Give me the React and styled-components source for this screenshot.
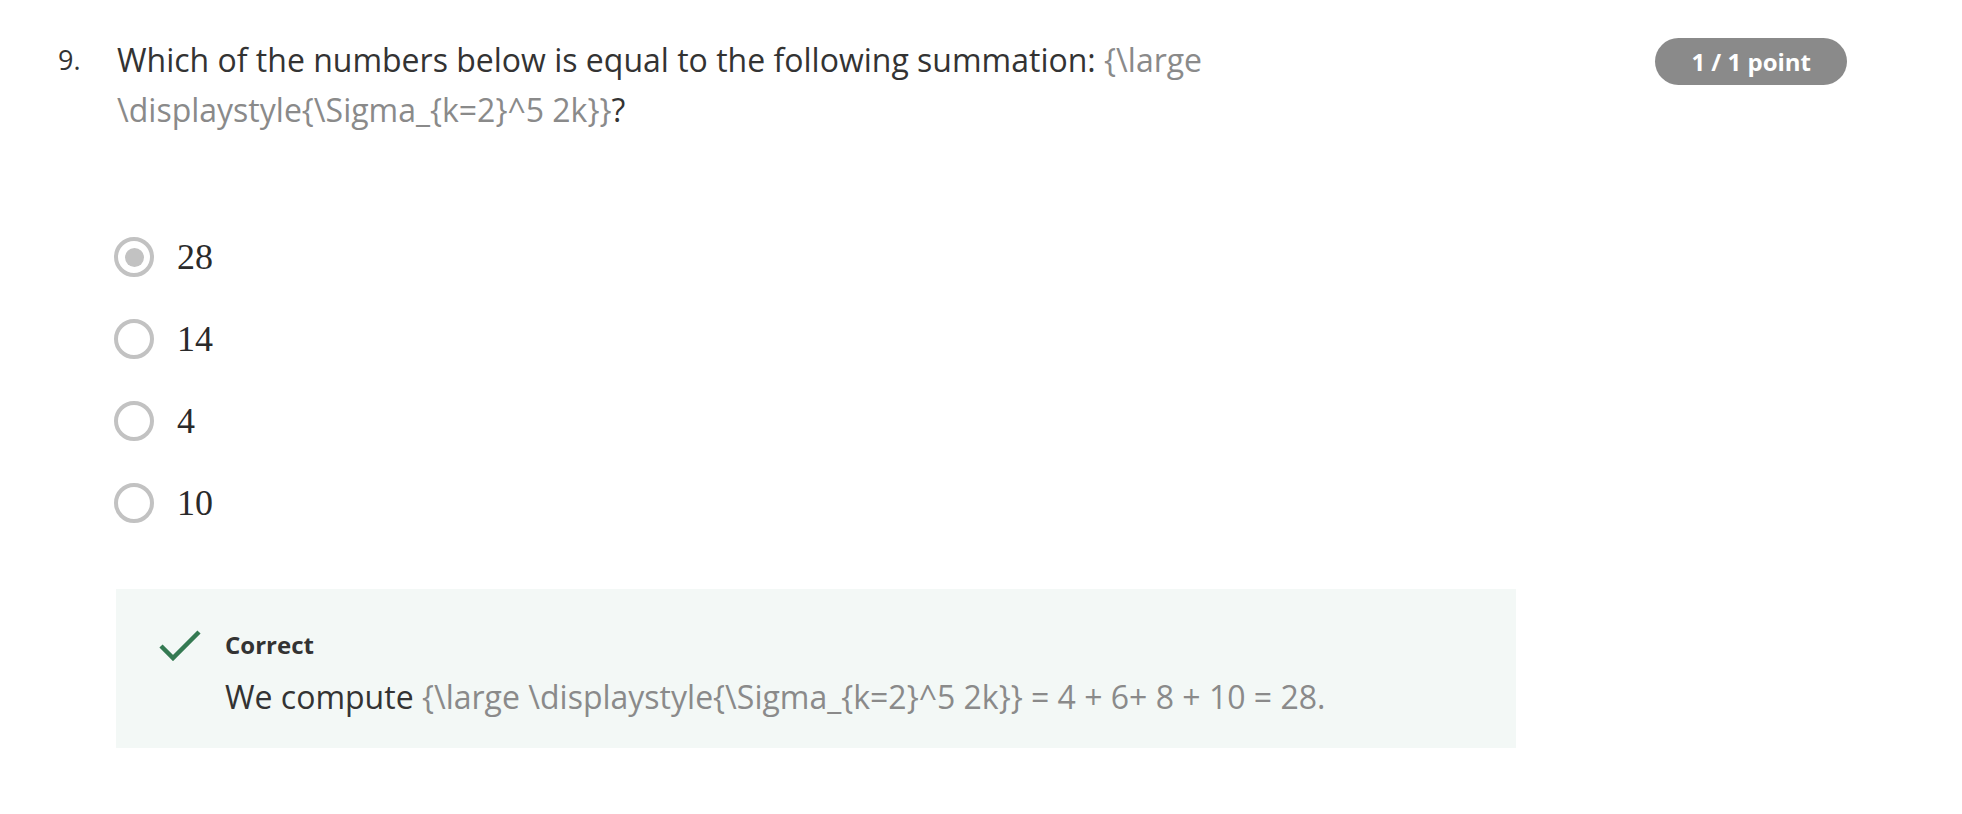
import React from 'react'
import styled, { createGlobalStyle } from 'styled-components'

const GlobalStyle = createGlobalStyle`
  * { box-sizing: border-box; }
  body {
    margin: 0;
    background: #ffffff;
    font-family: "Open Sans", "Liberation Sans", sans-serif;
    color: #333333;
  }
`

const Page = styled.div`
  width: 1962px;
  height: 814px;
  padding: 35px 115px 0 58px;
`

const Header = styled.div`
  display: flex;
  align-items: flex-start;
`

const Number = styled.div`
  width: 59px;
  flex-shrink: 0;
  font-size: 27px;
  line-height: 50px;
  color: #333333;
`

const Body = styled.div`
  width: 1400px;
  flex-shrink: 0;
`

const Question = styled.div`
  font-size: 32px;
  line-height: 50px;
  color: #333333;
`

const Tex = styled.span`
  color: #8a8a8a;
`

const Badge = styled.div`
  margin-left: auto;
  margin-top: 3px;
  height: 47px;
  padding: 0 36px;
  border-radius: 24px;
  background: #8a8a8a;
  color: #ffffff;
  font-weight: 700;
  font-size: 24px;
  display: flex;
  align-items: center;
  white-space: nowrap;
`

const Options = styled.div`
  display: flex;
  flex-direction: column;
  gap: 42px;
  margin-top: 102px;
`

const Option = styled.label`
  display: flex;
  align-items: center;
  gap: 23px;
  height: 40px;
  margin-left: -3px;
`

const Radio = styled.span`
  width: 40px;
  height: 40px;
  border-radius: 50%;
  border: 4px solid #c2c2c2;
  display: flex;
  align-items: center;
  justify-content: center;
  flex-shrink: 0;

  &::after {
    content: "";
    width: 19px;
    height: 19px;
    border-radius: 50%;
    background: ${(props) => (props.checked ? '#c2c2c2' : 'transparent')};
  }
`

const OptionText = styled.span`
  font-family: "Liberation Serif", "DejaVu Serif", serif;
  font-size: 36px;
  color: #2a2a2a;
`

const Feedback = styled.div`
  margin-top: 66px;
  margin-left: -1px;
  width: 1400px;
  height: 159px;
  background: #f3f8f6;
  display: flex;
  padding: 40px 0 0 43px;
`

const CheckIcon = styled.svg`
  width: 42px;
  height: 32px;
  flex-shrink: 0;
`

const FeedbackText = styled.div`
  margin-left: 24px;
`

const Verdict = styled.div`
  font-weight: 700;
  font-size: 24px;
  line-height: 32px;
  color: #333333;
`

const Explanation = styled.div`
  margin-top: 14px;
  font-size: 32px;
  line-height: 44px;
  color: #333333;
`

const options = [
  { label: '28', checked: true },
  { label: '14' },
  { label: '4' },
  { label: '10' },
]

const App = () => {
  return (
    <>
      <GlobalStyle />
      <Page>
        <Header>
          <Number>9.</Number>
          <Body>
            <Question>
              Which of the numbers below is equal to the following summation:{' '}
              <Tex>{'{\\large \\displaystyle{\\Sigma_{k=2}^5 2k}}'}</Tex>?
            </Question>
            <Options>
              {options.map((o) => (
                <Option key={o.label}>
                  <Radio checked={o.checked} />
                  <OptionText>{o.label}</OptionText>
                </Option>
              ))}
            </Options>
            <Feedback>
              <CheckIcon viewBox="0 0 42 32">
                <path d="M2 17 L14 29 L40 3" fill="none" stroke="#347a52" strokeWidth="4.5" />
              </CheckIcon>
              <FeedbackText>
                <Verdict>Correct</Verdict>
                <Explanation>
                  We compute{' '}
                  <Tex>{'{\\large \\displaystyle{\\Sigma_{k=2}^5 2k}} = 4 + 6+ 8 + 10 = 28.'}</Tex>
                </Explanation>
              </FeedbackText>
            </Feedback>
          </Body>
          <Badge>1 / 1 point</Badge>
        </Header>
      </Page>
    </>
  )
}

export default App
